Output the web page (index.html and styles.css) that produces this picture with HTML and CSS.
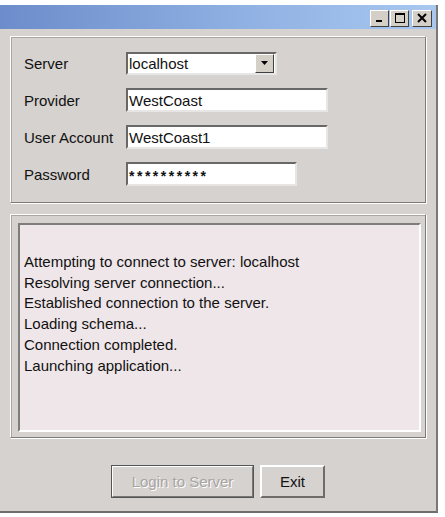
FILE: index.html
```html
<!DOCTYPE html>
<html lang="en">
<head>
<meta charset="UTF-8" />
<title>Login</title>
<link rel="stylesheet" href="styles.css">
</head>
<body>

<div class="window">
    <!-- title bar with min / max / close -->
    <div class="titlebar">
        <div class="caption-btns">
            <span class="cap-btn"><svg width="12" height="10" viewBox="0 0 12 10"><rect x="2" y="7" width="6" height="2" fill="#000"/></svg></span>
            <span class="cap-btn"><svg width="12" height="10" viewBox="0 0 12 10"><rect x="1.5" y="0.5" width="9" height="9" fill="none" stroke="#000"/><rect x="1" y="0" width="10" height="2" fill="#000"/></svg></span>
            <span class="cap-btn close"><svg width="12" height="10" viewBox="0 0 12 10"><path d="M2 1 L10 9 M10 1 L2 9" stroke="#000" stroke-width="2"/></svg></span>
        </div>
    </div>

    <div class="content">
        <!-- connection fields -->
        <div class="panel form">
            <div class="row">
                <label>Server</label>
                <div class="combo">
                    <span class="combo-text">localhost</span>
                    <span class="combo-btn"><svg width="8" height="5" viewBox="0 0 8 5"><path d="M0 0 H7 L3.5 4 Z" fill="#000"/></svg></span>
                </div>
            </div>
            <div class="row">
                <label>Provider</label>
                <div class="field wide">WestCoast</div>
            </div>
            <div class="row">
                <label>User Account</label>
                <div class="field wide">WestCoast1</div>
            </div>
            <div class="row">
                <label>Password</label>
                <div class="field pass">**********</div>
            </div>
        </div>

        <!-- status log -->
        <div class="panel log-panel">
            <div class="log">
                <div>Attempting to connect to server: localhost</div>
                <div>Resolving server connection...</div>
                <div>Established connection to the server.</div>
                <div>Loading schema...</div>
                <div>Connection completed.</div>
                <div>Launching application...</div>
            </div>
        </div>

        <div class="actions">
            <button class="btn default" disabled>Login to Server</button>
            <button class="btn">Exit</button>
        </div>
    </div>
</div>

</body>
</html>
```

FILE: styles.css
```css
/* --- Window frame ------------------------------------------------- */
body{
    margin:0;
    background:#fff;
    font-family:"Liberation Sans",Arial,sans-serif;
    font-size:15px;
    color:#111;
}
.window{
    width:436px;
    margin-top:5px;
    height:506px;
    background:#d6d2cf;
    border-right:2px solid #7a7876;
    border-bottom:2px solid #6f6d6b;
    display:flex;
    flex-direction:column;
}
.titlebar{
    height:24px;
    background:linear-gradient(to right,#6c8ccb,#8fb0e2 55%,#a8c8f0);
    display:flex;
    justify-content:flex-end;
    align-items:center;
    padding-right:4px;
}
.caption-btns{
    display:flex;
    gap:1px;
    margin-top:2px;
}
.cap-btn{
    width:17px;
    height:15px;
    background:#d4d0c8;
    border:1px solid;
    border-color:#fff #404040 #404040 #fff;
    display:flex;
    align-items:center;
    justify-content:center;
}
.cap-btn.close{ margin-left:2px; width:18px; }

/* --- Content ------------------------------------------------------- */
.content{
    flex:1;
    padding:7px 10px 0 10px;
    display:flex;
    flex-direction:column;
}
.panel{
    border:1px solid;
    border-color:#fff #7d7b79 #7d7b79 #fff;
    box-shadow:inset 1px 1px 0 #a9a6a3, 1px 1px 0 #fff;
}
.form{
    padding:14px 0 0 13px;
    display:flex;
    flex-direction:column;
    gap:13px;
    box-sizing:border-box;
    height:167px;
}
.row{
    display:flex;
    align-items:center;
    height:24px;
}
.row label{
    width:102px;
}
.field,.combo{
    height:24px;
    box-sizing:border-box;
    background:#fff;
    border:2px solid;
    border-color:#6a6866 #e8e6e4 #e8e6e4 #6a6866;
    padding-left:1px;
    display:flex;
    align-items:center;
}
.wide{ width:202px; }
.pass{ width:171px; letter-spacing:2.5px; font-size:14px; font-weight:bold; padding-top:3px; }
.combo{
    width:151px;
    justify-content:space-between;
    height:23px;
}
.combo-btn{
    width:17px;
    height:17px;
    margin-right:1px;
    background:#d4d0c8;
    border:1px solid;
    border-color:#fff #404040 #404040 #fff;
    display:flex;
    align-items:center;
    justify-content:center;
}

/* --- Status log ---------------------------------------------------- */
.log-panel{
    margin-top:11px;
    height:224px;
    box-sizing:border-box;
    padding:8px 4px 5px 7px;
}
.log{
    height:100%;
    box-sizing:border-box;
    background:#efe6e9;
    border:2px solid;
    border-color:#7f7d7b #fff #fff #7f7d7b;
    padding:27px 0 0 4px;
    line-height:20.7px;
}

/* --- Buttons ------------------------------------------------------- */
.actions{
    display:flex;
    justify-content:center;
    gap:6px;
    margin-top:27px;
}
.btn{
    height:33px;
    font-family:inherit;
    font-size:15px;
    background:#d6d2cf;
    color:#111;
    border:2px solid;
    border-color:#fff #6f6d6b #6f6d6b #fff;
    padding:0;
    width:65px;
}
.btn.default{
    width:143px;
    outline:1px solid #555;
    outline-offset:-1px;
    border-color:#fff #7a7876 #7a7876 #fff;
}
.btn:disabled{
    color:#a7a4a2;
    text-shadow:1px 1px 0 #fff;
}
```
